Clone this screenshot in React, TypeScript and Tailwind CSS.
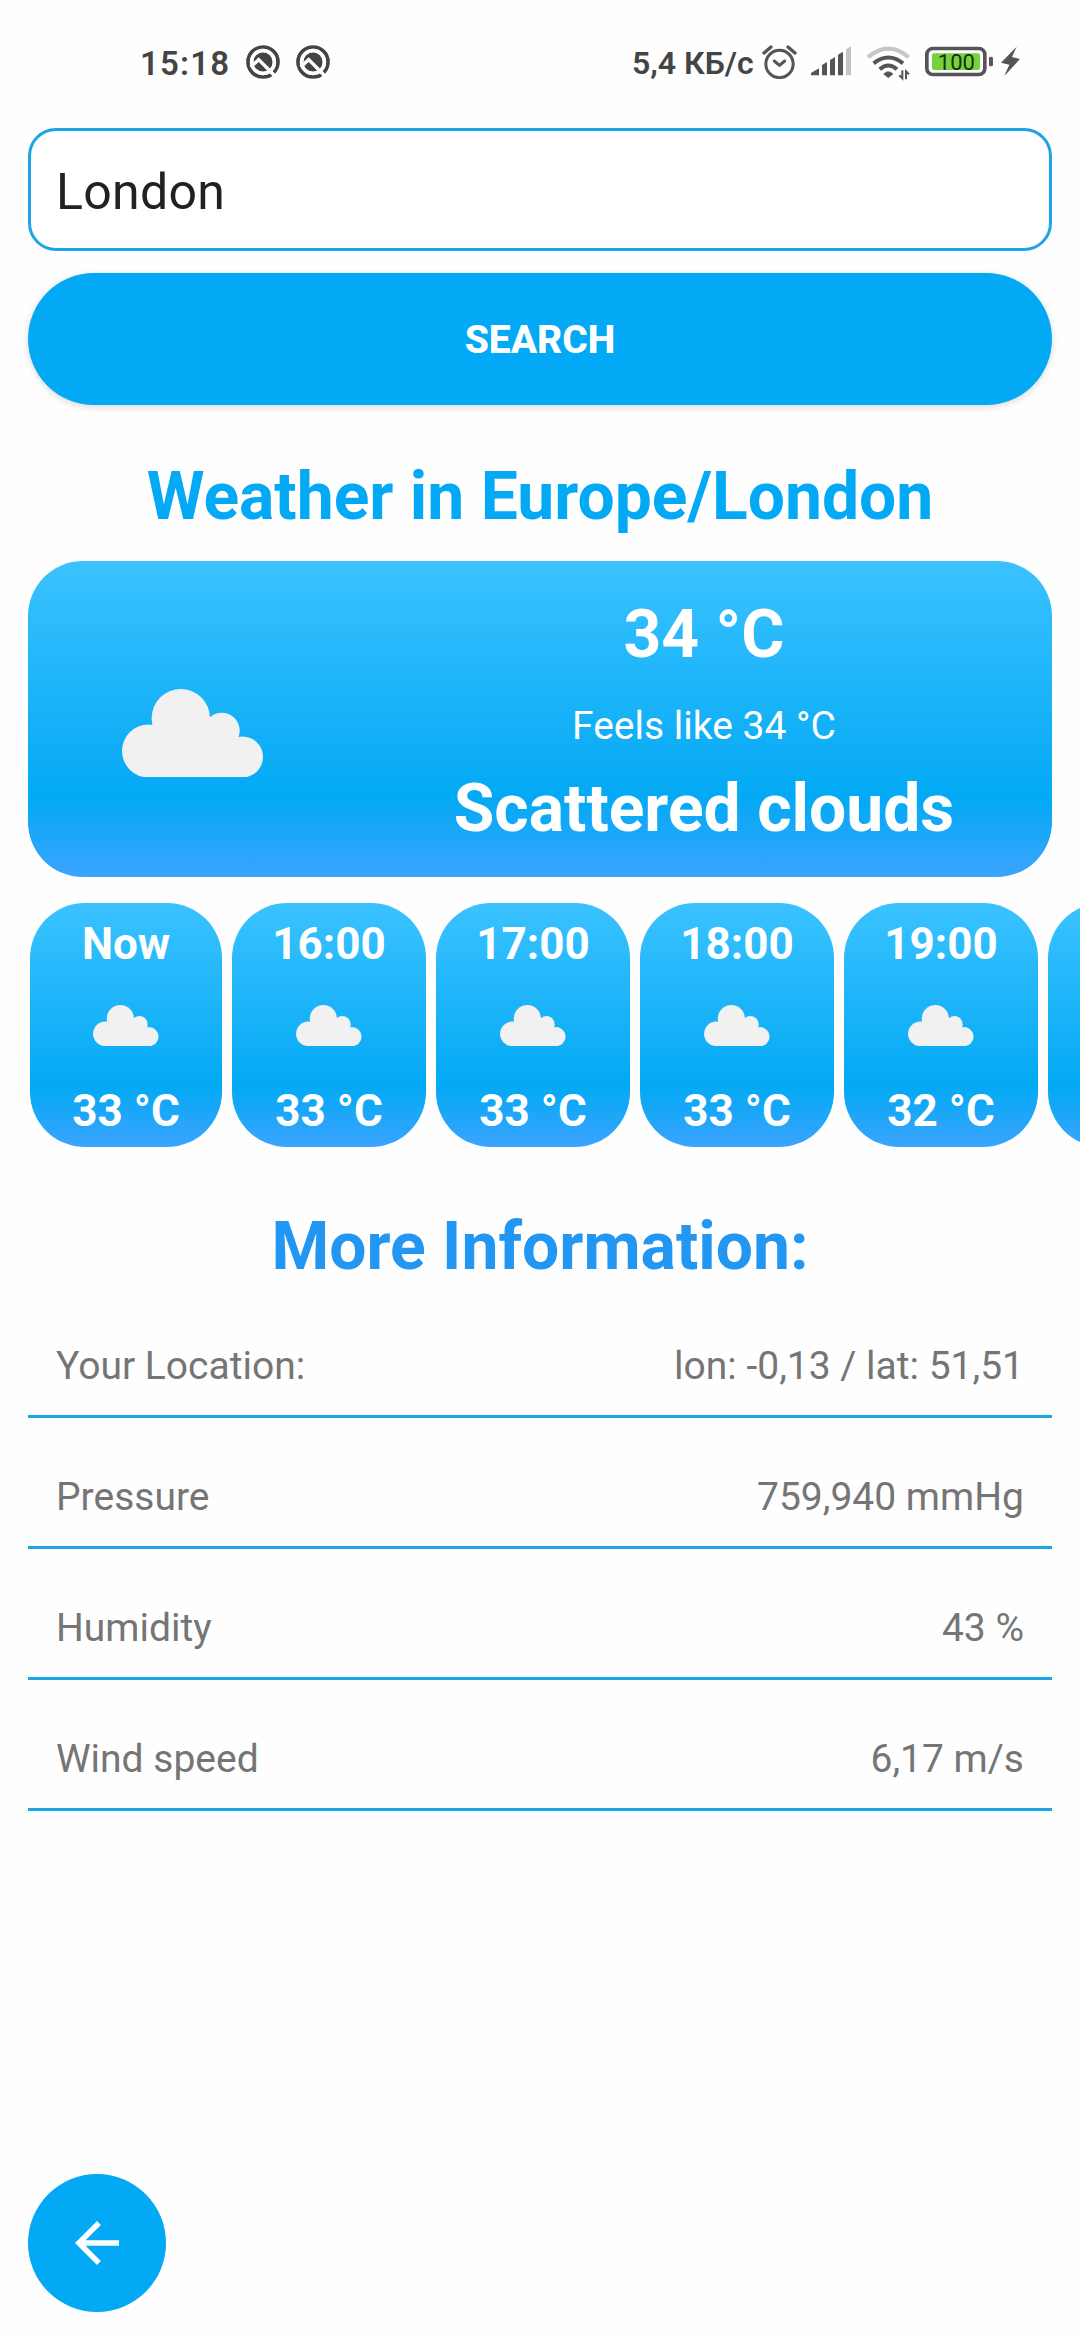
import React from "react";

const hours = [
  { time: "Now", temp: "33 °C" },
  { time: "16:00", temp: "33 °C" },
  { time: "17:00", temp: "33 °C" },
  { time: "18:00", temp: "33 °C" },
  { time: "19:00", temp: "32 °C" },
];

const details = [
  { label: "Your Location:", value: "lon: -0,13 / lat: 51,51" },
  { label: "Pressure", value: "759,940 mmHg" },
  { label: "Humidity", value: "43 %" },
  { label: "Wind speed", value: "6,17 m/s" },
];

function Cloud({ className }: { className: string }) {
  return (
    <svg viewBox="0 0 141 88.4" className={className} fill="#f1f1f1">
      <circle cx="26.4" cy="62" r="26.4" />
      <circle cx="58.8" cy="29.2" r="29.2" />
      <circle cx="99.8" cy="41.6" r="17.9" />
      <circle cx="120.5" cy="67.9" r="20.5" />
      <path d="M26.4 88.4V50L58 30H88L104 42L114 60L120.5 88.4Z" />
    </svg>
  );
}

function RingIcon({ className }: { className: string }) {
  return (
    <svg viewBox="0 0 102 102" className={className}>
      <circle cx="51" cy="51" r="45" fill="none" stroke="#444" strokeWidth="11" />
      <circle cx="51" cy="51" r="29" fill="#444" />
      <path d="M14 66L38 44L84 90" fill="none" stroke="#fff" strokeWidth="10" />
      <circle cx="51" cy="51" r="34.5" fill="none" stroke="#fff" strokeWidth="10" />
      <path d="M60 66L90 98" fill="none" stroke="#fff" strokeWidth="8" />
    </svg>
  );
}

function StatusBar() {
  return (
    <div className="flex h-[124px] items-center pl-[140px] text-[#444]">
      <span className="mt-[2px] w-[106px] text-[33px] font-semibold leading-none tracking-[1.2px]">15:18</span>
      <RingIcon className="h-[34px] w-[34px]" />
      <RingIcon className="ml-4 h-[34px] w-[34px]" />
      <span className="ml-[302px] mt-[2px] w-[130px] whitespace-nowrap text-[32px] font-semibold leading-none">5,4 КБ/с</span>
      <svg viewBox="0 0 105 102" className="h-[34px] w-[35px]" fill="none" stroke="#555" strokeWidth="9" strokeLinecap="round" strokeLinejoin="round">
        <circle cx="52.5" cy="57" r="41" />
        <path d="M37 48L52.5 61L68 48" />
        <path d="M6 24L27 6M99 24L78 6" strokeWidth="10" />
      </svg>
      <svg viewBox="30 40 630 115" className="ml-[13px] mt-[1px] h-[38.33px] w-[210px]">
        <g fill="#555">
          <path d="M33 137V130L57 116V137ZM66 137V106L81 97V137ZM90 137V91L105 82V137ZM114 137V75L129 66V137Z" />
          <path d="M265 144L251 133Q265 119 279 133Z" stroke="#555" strokeWidth="2" />
          <path d="M650 51L603 99L628 105L613 139L660 88L636 82Z" />
          <rect x="567" y="81" width="12" height="29" rx="5" />
        </g>
        <path d="M138 137V59L153 50V137Z" fill="#c6c6c6" />
        <g fill="none" stroke="#555" strokeWidth="12">
          <path d="M239 119Q265 96 291 119" />
          <path d="M221 101Q265 66 309 101" />
          <path d="M204 83Q265 31 326 83" stroke="#c6c6c6" />
        </g>
        <path d="M307 122V146L298 137M318 149V125L327 134" fill="none" stroke="#555" strokeWidth="6" />
        <rect x="380.5" y="56.5" width="174" height="78" rx="18" fill="#fff" stroke="#555" strokeWidth="11" />
        <rect x="396" y="71" width="144" height="50" rx="6" fill="#76d13f" />
        <text x="469" y="122" textAnchor="middle" fontSize="66" fill="#16330a" fontFamily="Roboto">100</text>
      </svg>
    </div>
  );
}

export default function App() {
  return (
    <div className="flex h-[2340px] w-[1080px] flex-col overflow-hidden bg-[#fefefe] font-['Roboto',sans-serif]">
      <StatusBar />
      <div className="mx-7 mt-1 flex h-[123px] items-center rounded-[28px] border-[3px] border-[#1ea4e2] bg-white pl-[25px] pt-[5px] text-[50px] leading-[60px] tracking-[0.3px] text-[#212121]">
        London
      </div>
      <button className="mx-7 mt-[22px] h-[132px] rounded-full bg-[#03a9f4] pt-[3px] text-[39px] font-extrabold text-white shadow-[0_2px_7px_rgba(0,0,0,0.15)]">
        SEARCH
      </button>
      <h1 className="flex h-[156px] items-end justify-center pb-[24px] text-[66px] font-bold leading-[80px] text-[#03a9f4]">
        Weather in Europe/London
      </h1>
      <section className="mx-7 flex h-[316px] shrink-0 rounded-[55px] bg-[linear-gradient(to_bottom,#3bc2ff_0%,#03a9f4_75%,#3ba4ff_100%)] text-white">
        <div className="w-[328px] pl-[94px] pt-[128px]">
          <Cloud className="h-[88.4px] w-[141px]" />
        </div>
        <div className="flex flex-1 flex-col items-center pt-[35px]">
          <p className="text-[66px] font-bold leading-[78px]">34 °C</p>
          <p className="mt-[29px] text-[39px] leading-[46px]">Feels like 34 °C</p>
          <p className="mt-[21px] text-[66px] font-bold leading-[78px]">Scattered clouds</p>
        </div>
      </section>
      <div className="mt-[26px] flex h-[244px] shrink-0 gap-[10px] overflow-hidden pl-[30px]">
        {hours.map((h, i) => (
          <div
            key={h.time}
            className={`${i === 0 ? "w-[192px]" : "w-[194px]"} flex shrink-0 flex-col items-center rounded-[55px] bg-[linear-gradient(to_bottom,#3bc2ff_0%,#03a9f4_75%,#3ba4ff_100%)] text-[44px] font-bold leading-[52px] text-white`}
          >
            <p className="mt-[15px]">{h.time}</p>
            <Cloud className="mt-[35px] h-[41.2px] w-[65.6px]" />
            <p className="mt-[39px]">{h.temp}</p>
          </div>
        ))}
        <div className="w-[194px] shrink-0 rounded-[55px] bg-[linear-gradient(to_bottom,#3bc2ff_0%,#03a9f4_75%,#3ba4ff_100%)]" />
      </div>
      <h2 className="flex h-[140px] items-end justify-center text-[66px] font-bold leading-[80px] text-[#2196f3]">
        More Information:
      </h2>
      <div className="mx-7 flex flex-col">
        {details.map((d) => (
          <div key={d.label} className="flex h-[131px] items-end justify-between border-b-[3px] border-[#1ea4e2] px-7 pb-[26px] text-[39px] leading-[46px] text-[#757575]">
            <span>{d.label}</span>
            <span>{d.value}</span>
          </div>
        ))}
      </div>
      <button className="mb-7 ml-7 mt-auto flex h-[138px] w-[138px] items-center justify-center rounded-full bg-[#03a9f4]">
        <svg viewBox="0 0 24 24" className="h-[66px] w-[66px]" fill="#fff">
          <path d="M20 11H7.830l5.590-5.590L12 4l-8 8 8 8 1.410-1.410L7.830 13H20v-2z" />
        </svg>
      </button>
    </div>
  );
}
